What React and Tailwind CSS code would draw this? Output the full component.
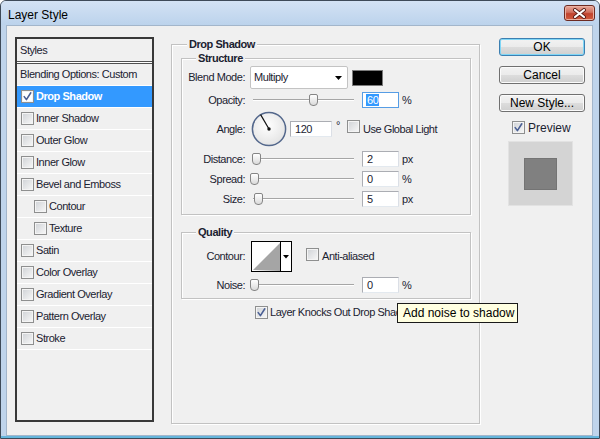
import React from 'react';

function Check({ checked, white }) {
  return (
    <span
      className={`inline-flex h-[13px] w-[13px] shrink-0 items-center justify-center border border-[#8e8f8f] ${
        white ? 'bg-white' : 'bg-[linear-gradient(135deg,#cfd2d6,#f8f8f8)]'
      } shadow-[inset_0_0_0_1px_#f4f4f4]`}
    >
      {checked && (
        <svg width="11" height="11" viewBox="0 0 11 11">
          <path
            d="M2.2 5.6 L4.4 8.6 L8.8 1.8"
            fill="none"
            stroke="#4a5f94"
            strokeWidth="1.6"
            strokeLinecap="round"
            strokeLinejoin="round"
          />
        </svg>
      )}
    </span>
  );
}

function Slider({ pos }) {
  return (
    <div className="relative ml-[8px] flex h-[14px] w-[101px] shrink-0 items-center">
      <div className="h-[2px] w-full border-t border-[#a6a6a6] bg-white" />
      <div
        className="absolute top-[1px] h-[12px] w-[9px] rounded-t-[2px] rounded-b-[4px] border border-[#858585] bg-[linear-gradient(#ffffff,#dadada)]"
        style={{ left: pos }}
      />
    </div>
  );
}

function Field({ value, className }) {
  return (
    <div
      className={`flex h-[16px] shrink-0 items-center border border-[#abadb3] border-r-[#dbdfe6] border-b-[#e3e9ef] bg-white pl-[4px] ${className}`}
    >
      {value}
    </div>
  );
}

function Label({ children }) {
  return <span className="w-[63px] shrink-0 text-right">{children}</span>;
}

const items = [
  { label: 'Drop Shadow', checked: true, selected: true },
  { label: 'Inner Shadow' },
  { label: 'Outer Glow' },
  { label: 'Inner Glow' },
  { label: 'Bevel and Emboss' },
  { label: 'Contour', indent: true },
  { label: 'Texture', indent: true },
  { label: 'Satin' },
  { label: 'Color Overlay' },
  { label: 'Gradient Overlay' },
  { label: 'Pattern Overlay' },
  { label: 'Stroke' },
];

const groupCls =
  'border border-[#c2c2c2] shadow-[inset_1px_1px_0_#ffffff,1px_1px_0_#ffffff]';

const btnCls =
  'flex h-[18px] w-[86px] items-center justify-center rounded-[3px] border border-[#707070] bg-[linear-gradient(#f2f2f2,#ebebeb_50%,#dddddd_50%,#cfcfcf)] text-[12px] tracking-normal text-black shadow-[inset_0_0_0_1px_#fbfbfb]';

export default function App() {
  return (
    <div className="flex h-[439px] w-[600px] flex-col overflow-hidden rounded-t-[6px] border border-[#3e4a58] bg-[#bfd4eb] font-['Liberation_Sans',Arial,sans-serif] text-[11px] tracking-[-0.45px] text-[#1b2230]">
      {/* title bar */}
      <div className="flex h-[24px] shrink-0 items-start justify-between bg-[linear-gradient(#d3e2f4,#bcd3ec)] pl-[7px] pr-[4px]">
        <span className="mt-[7px] text-[12px] leading-[15px] tracking-normal text-black">Layer Style</span>
        <div className="mt-[4px] flex h-[16px] w-[31px] items-center justify-center rounded-[3px] border border-[#6d2b22] bg-[linear-gradient(#e9a99a,#d0705e_45%,#c0422d_55%,#d25c3f)] shadow-[inset_0_0_0_1px_#eab1a2]">
          <svg width="15" height="11" viewBox="0 0 15 11">
            <path d="M3 2 L12 9 M12 2 L3 9" stroke="#5a2019" strokeWidth="4" strokeLinecap="round" />
            <path d="M3 2 L12 9 M12 2 L3 9" stroke="#ffffff" strokeWidth="2.2" strokeLinecap="round" />
          </svg>
        </div>
      </div>

      {/* content */}
      <div className="ml-[5px] mr-[6px] flex h-[411px] shrink-0 items-start border border-[#a3b6cb] bg-[#f0f0f0]">
        {/* styles list */}
        <div className="ml-[8px] mt-[11px] flex h-[385px] w-[139px] shrink-0 flex-col border-2 border-[#393939] bg-[#f0f0f0]">
          <div className="flex h-[22px] shrink-0 items-center pl-[3px]">Styles</div>
          <div className="h-[3px] shrink-0 border-y border-[#505050] bg-white" />
          <div className="flex h-[22px] shrink-0 items-center border-b border-white pl-[3px]">
            Blending Options: Custom
          </div>
          {items.map((it) => (
            <div
              key={it.label}
              className={`flex h-[22px] shrink-0 items-center border-b border-white ${
                it.indent ? 'pl-[17px]' : 'pl-[4px]'
              } ${it.selected ? 'bg-[#3399ff] font-bold text-white' : ''}`}
            >
              <Check checked={it.checked} white={it.selected} />
              <span className="ml-[2px]">{it.label}</span>
            </div>
          ))}
        </div>

        {/* Drop Shadow group */}
        <div className={`relative ml-[17px] mt-[18px] h-[380px] w-[309px] shrink-0 ${groupCls}`}>
          <span className="absolute -top-[7px] left-[15px] bg-[#f0f0f0] px-[2px] font-bold leading-[13px]">
            Drop Shadow
          </span>

          <div className="flex flex-col items-start">
            {/* Structure */}
            <div className={`relative ml-[9px] mt-[13px] h-[157px] w-[290px] ${groupCls}`}>
              <span className="absolute -top-[7px] left-[14px] bg-[#f0f0f0] px-[2px] font-bold leading-[13px]">
                Structure
              </span>
              <div className="flex flex-col">
                <div className="mt-[7px] flex h-[23px] items-center">
                  <Label>Blend Mode:</Label>
                  <div className="ml-[5px] flex h-[23px] w-[98px] items-center justify-between rounded-[2px] border border-[#c3c3c3] bg-white pl-[3px] pr-[5px]">
                    <span>Multiply</span>
                    <svg width="7" height="4" viewBox="0 0 7 4">
                      <path d="M0 0 H7 L3.5 4 Z" fill="#000" />
                    </svg>
                  </div>
                  <div className="ml-[4px] h-[16px] w-[31px] border border-[#7a7a7a] bg-black" />
                </div>

                <div className="mt-[3px] flex h-[16px] items-center">
                  <Label>Opacity:</Label>
                  <Slider pos={56} />
                  <div className="ml-[8px] flex h-[16px] w-[37px] items-center border border-[#569de5] bg-white pl-[3px]">
                    <span className="bg-[#3399ff] px-[1px] leading-[12px] text-white">60</span>
                  </div>
                  <span className="ml-[3px]">%</span>
                </div>

                <div className="mt-[3px] flex h-[36px] items-center">
                  <Label>Angle:</Label>
                  <svg className="ml-[6px] shrink-0" width="36" height="36" viewBox="0 0 36 36">
                    <defs>
                      <radialGradient id="dial" cx="45%" cy="40%" r="65%">
                        <stop offset="0" stopColor="#ffffff" />
                        <stop offset="1" stopColor="#e2e2e2" />
                      </radialGradient>
                    </defs>
                    <circle cx="18" cy="18" r="16.6" fill="url(#dial)" stroke="#54688c" strokeWidth="1.5" />
                    <line x1="18" y1="18" x2="9.6" y2="3.6" stroke="#111" strokeWidth="1.2" />
                    <circle cx="18" cy="18" r="1.7" fill="#111" />
                  </svg>
                  <Field value="120" className="ml-[3px] w-[42px]" />
                  <span className="mb-[8px] ml-[4px]">°</span>
                  <span className="ml-[7px]">
                    <Check />
                  </span>
                  <span className="ml-[3px]">Use Global Light</span>
                </div>

                <div className="mt-[4px] flex h-[16px] items-center">
                  <Label>Distance:</Label>
                  <Slider pos={-1} />
                  <Field value="2" className="ml-[8px] w-[37px]" />
                  <span className="ml-[3px]">px</span>
                </div>

                <div className="mt-[4px] flex h-[16px] items-center">
                  <Label>Spread:</Label>
                  <Slider pos={-3} />
                  <Field value="0" className="ml-[8px] w-[37px]" />
                  <span className="ml-[3px]">%</span>
                </div>

                <div className="mt-[4px] flex h-[16px] items-center">
                  <Label>Size:</Label>
                  <Slider pos={1} />
                  <Field value="5" className="ml-[8px] w-[37px]" />
                  <span className="ml-[3px]">px</span>
                </div>
              </div>
            </div>

            {/* Quality */}
            <div className={`relative ml-[9px] mt-[17px] h-[67px] w-[290px] ${groupCls}`}>
              <span className="absolute -top-[7px] left-[14px] bg-[#f0f0f0] px-[2px] font-bold leading-[13px]">
                Quality
              </span>
              <div className="flex flex-col">
                <div className="mt-[8px] flex h-[31px] items-center">
                  <Label>Contour:</Label>
                  <div className="ml-[6px] flex h-[31px] w-[41px] border border-black bg-white">
                    <div className="h-full w-[29px] border-r border-black">
                      <svg width="28" height="29" viewBox="0 0 28 29">
                        <polygon points="1,28 28,1 28,29" fill="#a5a5a5" />
                      </svg>
                    </div>
                    <div className="flex flex-1 items-center justify-center">
                      <svg width="6" height="4" viewBox="0 0 6 4">
                        <path d="M0 0 H6 L3 3.5 Z" fill="#000" />
                      </svg>
                    </div>
                  </div>
                  <span className="ml-[14px]">
                    <Check />
                  </span>
                  <span className="ml-[3px]">Anti-aliased</span>
                </div>
                <div className="mt-[5px] flex h-[16px] items-center">
                  <Label>Noise:</Label>
                  <Slider pos={-3} />
                  <Field value="0" className="ml-[8px] w-[37px]" />
                  <span className="ml-[3px]">%</span>
                </div>
              </div>
            </div>

            <div className="ml-[83px] mt-[7px] flex h-[13px] items-center">
              <Check checked />
              <span className="ml-[2px] whitespace-nowrap">Layer Knocks Out Drop Shadow</span>
            </div>
          </div>

          {/* tooltip, floating over the checkbox label */}
          <div className="absolute left-[225px] top-[258px] z-10 flex h-[20px] w-[121px] items-center border border-[#1a1a1a] bg-[#ffffe1] pl-[5px] text-[12px] tracking-normal text-black">
            Add noise to shadow
          </div>
        </div>

        {/* right column */}
        <div className="ml-[19px] mt-[12px] flex w-[86px] shrink-0 flex-col">
          <button className="flex h-[18px] w-[86px] items-center justify-center rounded-[3px] border border-[#3c7fb1] bg-[linear-gradient(#f2f2f2,#ebebeb_50%,#dddddd_50%,#cfcfcf)] text-[12px] tracking-normal text-black shadow-[inset_0_0_0_1px_#7fd6f6]">
            OK
          </button>
          <button className={`mt-[10px] ${btnCls}`}>Cancel</button>
          <button className={`mt-[10px] ${btnCls}`}>New Style...</button>
          <div className="mt-[9px] flex h-[13px] items-center pl-[13px]">
            <Check checked />
            <span className="ml-[3px] text-[12px] tracking-normal">Preview</span>
          </div>
          <div className="ml-[9px] mt-[7px] flex h-[65px] w-[65px] items-center justify-center border border-[#e2e2e2] bg-[#d4d4d4]">
            <div className="h-[32px] w-[33px] border border-[#747474] bg-[#808080]" />
          </div>
        </div>
      </div>

      <div className="h-[2px] shrink-0 bg-[#66b6dc]" />
    </div>
  );
}
